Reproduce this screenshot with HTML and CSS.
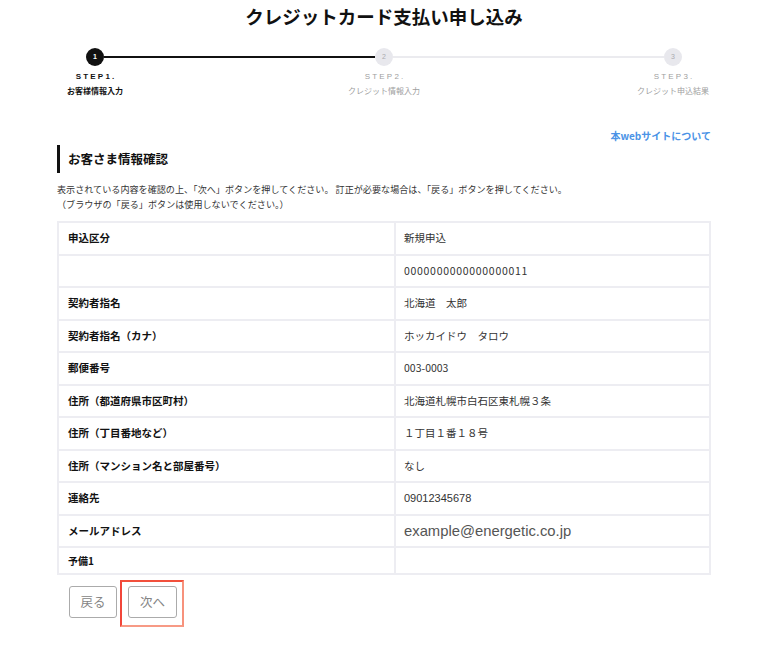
FILE: index.html
```html
<!DOCTYPE html>
<html lang="ja">
<head>
<meta charset="utf-8">
<title>クレジットカード支払い申し込み</title>
<link rel="stylesheet" href="styles.css">
</head>
<body>
<div class="page">
  <h1 class="title">クレジットカード支払い申し込み</h1>

  <div class="stepper">
    <div class="track">
      <span class="dot dot-active">1</span>
      <span class="line line-done"></span>
      <span class="dot">2</span>
      <span class="line"></span>
      <span class="dot">3</span>
    </div>
    <div class="labels">
      <div class="step step-active">
        <div class="step-no">STEP1.</div>
        <div class="step-name">お客様情報入力</div>
      </div>
      <div class="step">
        <div class="step-no">STEP2.</div>
        <div class="step-name">クレジット情報入力</div>
      </div>
      <div class="step">
        <div class="step-no">STEP3.</div>
        <div class="step-name">クレジット申込結果</div>
      </div>
    </div>
  </div>

  <div class="about"><a class="about-link" href="#">本webサイトについて</a></div>

  <h2 class="section-title">お客さま情報確認</h2>

  <p class="desc">表示されている内容を確認の上、「次へ」ボタンを押してください。 訂正が必要な場合は、「戻る」ボタンを押してください。<br>（ブラウザの「戻る」ボタンは使用しないでください。）</p>

  <table class="info">
    <tbody>
      <tr><th>申込区分</th><td>新規申込</td></tr>
      <tr><th></th><td class="num">0000000000000000011</td></tr>
      <tr><th>契約者指名</th><td>北海道　太郎</td></tr>
      <tr><th>契約者指名（カナ）</th><td>ホッカイドウ　タロウ</td></tr>
      <tr><th>郵便番号</th><td>003-0003</td></tr>
      <tr><th>住所（都道府県市区町村）</th><td>北海道札幌市白石区東札幌３条</td></tr>
      <tr><th>住所（丁目番地など）</th><td>１丁目１番１８号</td></tr>
      <tr><th>住所（マンション名と部屋番号）</th><td>なし</td></tr>
      <tr><th>連絡先</th><td class="latin">09012345678</td></tr>
      <tr><th>メールアドレス</th><td class="email">example@energetic.co.jp</td></tr>
      <tr class="row-short"><th class="small">予備1</th><td></td></tr>
    </tbody>
  </table>

  <div class="actions">
    <button class="btn btn-back" type="button">戻る</button>
    <span class="focus-ring"><button class="btn btn-next" type="button">次へ</button></span>
  </div>
</div>
</body>
</html>
```

FILE: styles.css
```css
html, body {
  margin: 0;
  padding: 0;
  background: #ffffff;
}

body {
  font-family: "Noto Sans CJK JP", "Noto Sans", sans-serif;
  color: #222;
}

.page {
  width: 654px;
  margin: 0 0 0 57px;
  padding-bottom: 40px;
}

.title {
  margin: 0;
  padding-top: 4px;
  font-size: 18.5px;
  line-height: 24px;
  font-weight: 700;
  text-align: center;
  color: #111;
}

/* stepper */
.stepper {
  margin-top: 19.5px;
}

.track {
  display: flex;
  align-items: center;
  margin: 0 29px;
}

.dot {
  width: 18px;
  height: 18px;
  border-radius: 50%;
  background: #e8e8ed;
  color: #aaaab0;
  font-family: "Liberation Sans", sans-serif;
  font-size: 7px;
  line-height: 18px;
  text-align: center;
  flex: none;
}

.dot-active {
  background: #111;
  color: #fff;
  font-weight: 700;
}

.line {
  flex: 1;
  height: 2px;
  background: #ebebef;
}

.line-done {
  background: #111;
}

.labels {
  display: flex;
  justify-content: space-between;
  margin-top: 6px;
}

.step {
  width: 76px;
  text-align: center;
  color: #a0a0a0;
}

.step-no {
  font-family: "Liberation Sans", sans-serif;
  font-size: 8px;
  line-height: 10px;
  letter-spacing: 2.2px;
  padding-left: 2.2px;
}

.step-name {
  margin-top: 3.5px;
  font-size: 8px;
  line-height: 12px;
  white-space: nowrap;
}

.step-active {
  color: #111;
}

.step-active .step-no,
.step-active .step-name {
  font-weight: 700;
}

/* about link */
.about {
  margin-top: 29px;
  text-align: right;
  line-height: 14px;
}

.about-link {
  font-size: 10px;
  font-weight: 700;
  color: #4b93e6;
  text-decoration: none;
}

/* section heading */
.section-title {
  margin: 2px 0 0 0;
  height: 28px;
  border-left: 3px solid #111;
  padding-left: 8px;
  font-size: 12.5px;
  line-height: 28px;
  font-weight: 700;
  color: #111;
}

.desc {
  margin: 8.5px 0 0 0;
  font-size: 9.1px;
  line-height: 15px;
  color: #333;
}

/* table */
.info {
  margin-top: 9.5px;
  width: 100%;
  border-collapse: collapse;
  table-layout: fixed;
}

.info th,
.info td {
  border: 2px solid #ededf2;
  height: 32.5px;
  padding: 0;
  font-size: 10.5px;
  line-height: 14px;
  text-align: left;
  vertical-align: middle;
  box-sizing: border-box;
}

.info th {
  width: 337px;
  padding-left: 9px;
  font-weight: 700;
  color: #111;
}

.info td {
  padding-left: 8px;
  font-weight: 400;
  color: #333;
}

.info .num {
  letter-spacing: 0.7px;
}

.info .latin {
  font-family: "Liberation Sans", sans-serif;
  font-size: 11px;
}

.info .email {
  font-family: "Liberation Sans", sans-serif;
  font-size: 14.8px;
  color: #555;
}

.info .row-short th,
.info .row-short td {
  height: 27px;
}

.info .small {
  font-size: 10px;
}

/* buttons */
.actions {
  display: flex;
  align-items: flex-start;
  gap: 3px;
  margin-top: 5px;
  padding-left: 12px;
}

.btn {
  display: block;
  width: 48px;
  height: 32px;
  padding: 0;
  border: 1.5px solid #ababab;
  border-radius: 3px;
  background: #fff;
  color: #858585;
  font-family: "Noto Sans CJK JP", sans-serif;
  font-size: 12.5px;
  line-height: 1;
}

.btn-back {
  margin-top: 6px;
}

.btn-next {
  width: 49px;
}

.focus-ring {
  display: block;
  padding: 4px 5px 7px 6px;
  border-style: solid;
  border-width: 2px;
  border-color: #f2503c #f7927c #f79a85 #f2463a;
}
```
